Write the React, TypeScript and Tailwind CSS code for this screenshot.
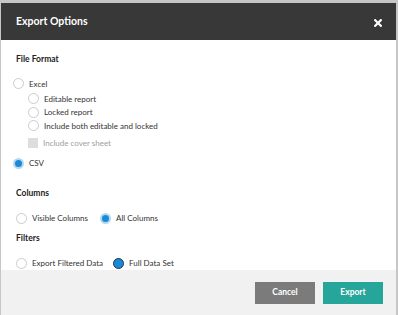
import React from "react";

type RadioProps = {
  label: string;
  checked?: boolean;
  focused?: boolean;
};

function Radio({ label, checked, focused }: RadioProps) {
  return (
    <label className="flex h-[13px] items-center gap-[5px]">
      {checked ? (
        <span
          className={
            focused
              ? "h-[11px] w-[11px] shrink-0 rounded-full border-[1.5px] border-[#1d3550] bg-[#1a8ad6]"
              : "h-[11px] w-[11px] shrink-0 rounded-full border-2 border-[#b3d8f2] bg-[#1a8ad6]"
          }
        />
      ) : (
        <span className="h-[11px] w-[11px] shrink-0 rounded-full border border-[#cccccc] bg-white" />
      )}
      <span className="text-[8px] leading-none text-[#333]">{label}</span>
    </label>
  );
}

function SectionTitle({ children }: { children: React.ReactNode }) {
  return <div className="h-[12px] text-[8.5px] font-bold leading-[12px] text-[#222]">{children}</div>;
}

export default function App() {
  return (
    <div
      className="h-[315px] w-[398px] bg-[#c6c6c6] pl-[1px] pr-[2px] pt-[3px]"
      style={{ fontFamily: "'Lato', 'Noto Sans', sans-serif" }}
    >
      <div className="flex h-full flex-col bg-white">
        <div className="flex h-[37px] shrink-0 items-center justify-between bg-[#383838] pl-[15px] pr-[14px]">
          <span className="text-[10.5px] font-bold text-white">Export Options</span>
          <svg width="8" height="8" viewBox="0 0 8 8" className="mt-[2px]">
            <path d="M1.2 1.2 L6.8 6.8 M6.8 1.2 L1.2 6.8" stroke="white" strokeWidth="2.2" strokeLinecap="square" />
          </svg>
        </div>

        <div className="flex-1 overflow-hidden pl-[15px] pr-[15px] pt-[13px]">
          <SectionTitle>File Format</SectionTitle>

          <div className="mt-[12px] -ml-[3px]">
            <Radio label="Excel" />
            <div className="ml-[15px] mt-[2px] flex flex-col">
              <div className="h-[13.5px]">
                <Radio label="Editable report" />
              </div>
              <div className="h-[13.5px]">
                <Radio label="Locked report" />
              </div>
              <div className="h-[13.5px]">
                <Radio label="Include both editable and locked" />
              </div>
              <div className="mt-[4px] flex h-[12px] items-center gap-[5px]">
                <span className="h-[10px] w-[10px] shrink-0 bg-[#dddddd]" />
                <span className="text-[8px] leading-none text-[#a0a0a0]">Include cover sheet</span>
              </div>
            </div>
            <div className="mt-[8px]">
              <Radio label="CSV" checked />
            </div>
          </div>

          <div className="mt-[17px]">
            <SectionTitle>Columns</SectionTitle>
          </div>
          <div className="mt-[13px] flex gap-[12px]">
            <Radio label="Visible Columns" />
            <Radio label="All Columns" checked />
          </div>

          <div className="mt-[7px]">
            <SectionTitle>Filters</SectionTitle>
          </div>
          <div className="mt-[13px] flex gap-[10px]">
            <Radio label="Export Filtered Data" />
            <Radio label="Full Data Set" checked focused />
          </div>
        </div>

        <div className="flex h-[45px] shrink-0 items-center justify-end gap-[8px] bg-[#f1f1f1] pr-[13px]">
          <button className="h-[22px] w-[60px] bg-[#7b7b7b] text-[8.5px] font-bold text-white">
            Cancel
          </button>
          <button className="h-[22px] w-[60px] bg-[#26a69a] text-[8.5px] font-bold text-white">
            Export
          </button>
        </div>
      </div>
    </div>
  );
}
